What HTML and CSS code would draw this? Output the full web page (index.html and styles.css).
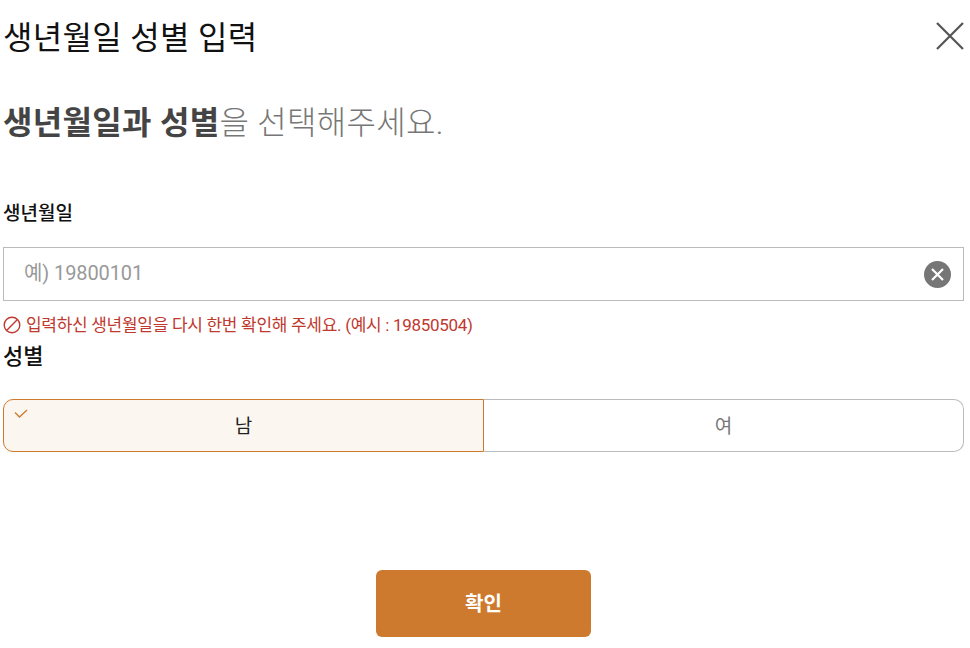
FILE: index.html
```html
<!DOCTYPE html>
<html lang="ko">
<head>
    <meta charset="UTF-8">
    <meta name="viewport" content="width=device-width, initial-scale=1.0">
    <title>생년월일 성별 입력</title>
    <link rel="stylesheet" href="styles.css">
</head>
<body>
    <div class="popup">
        <header class="popup-head">
            <h1>생년월일 성별 입력</h1>
            <button class="close-btn" aria-label="닫기">
                <svg width="28" height="28" viewBox="0 0 28 28"><path d="M1 1 L27 27 M27 1 L1 27" stroke="#555" stroke-width="2.2" fill="none"/></svg>
            </button>
        </header>

        <h2 class="lead"><strong>생년월일과 성별</strong>을 선택해주세요.</h2>

        <label class="field-label">생년월일</label>
        <div class="input-box">
            <span class="placeholder">예) 19800101</span>
            <button class="clear-btn" aria-label="지우기">
                <svg width="27" height="27" viewBox="0 0 27 27"><circle cx="13.5" cy="13.5" r="13.5" fill="#767676"/><path d="M8 8 L19 19 M19 8 L8 19" stroke="#fff" stroke-width="2.2" fill="none"/></svg>
            </button>
        </div>
        <p class="error">
            <svg width="18" height="18" viewBox="0 0 18 18"><circle cx="9" cy="9" r="7.8" stroke="#c0392f" stroke-width="1.4" fill="none"/><path d="M3.6 14.4 L14.4 3.6" stroke="#c0392f" stroke-width="1.4"/></svg>
            입력하신 생년월일을 다시 한번 확인해 주세요. (예시 : 19850504)
        </p>

        <div class="gender-label">성별</div>
        <div class="gender">
            <div class="gender-item selected">
                <svg class="check" width="14" height="10" viewBox="0 0 14 10"><path d="M1 3.5 L5.5 8 L13 1" stroke="#cd7a2e" stroke-width="1.3" fill="none"/></svg>
                남
            </div>
            <div class="gender-item">여</div>
        </div>

        <div class="actions">
            <button class="confirm-btn">확인</button>
        </div>
    </div>
</body>
</html>
```

FILE: styles.css
```css
/* General Styling */
* {
    margin: 0;
    padding: 0;
    box-sizing: border-box;
    font-family: Roboto, "Noto Sans CJK KR", sans-serif;
}

body {
    background: white;
    color: black;
}

button {
    background: none;
    border: none;
    cursor: pointer;
}

.popup {
    padding: 0 6px 0 3px;
}

/* Header */
.popup-head {
    display: flex;
    justify-content: space-between;
    align-items: center;
    height: 72px;
}

.popup-head h1 {
    padding-top: 4px;
    font-size: 32px;
    line-height: 68px;
    font-weight: 400;
    letter-spacing: 0.3px;
    color: #111;
}

.close-btn {
    display: flex;
}

.lead {
    margin-top: 26px;
    font-size: 32px;
    line-height: 50px;
    font-weight: 300;
    letter-spacing: 0.3px;
    color: #777;
}

.lead strong {
    font-weight: 700;
    color: #444;
}

/* Birth date */
.field-label {
    display: block;
    margin-top: 53px;
    font-size: 19px;
    line-height: 26px;
    font-weight: 500;
    color: #111;
}

.input-box {
    display: flex;
    justify-content: space-between;
    align-items: center;
    height: 54px;
    margin-top: 20px;
    padding: 0 12px 0 20px;
    border: 1px solid #bbb;
}

.placeholder {
    padding-bottom: 5px;
    font-size: 20px;
    letter-spacing: -0.1px;
    color: #999;
}

.clear-btn {
    display: flex;
}

.error {
    display: flex;
    align-items: center;
    gap: 5px;
    margin-top: 13px;
    font-size: 17px;
    line-height: 22px;
    letter-spacing: -0.3px;
    color: #c0392f;
}

/* Gender */
.gender-label {
    margin-top: 6px;
    font-size: 22px;
    line-height: 30px;
    font-weight: 500;
    color: #111;
}

.gender {
    display: flex;
    height: 53px;
    margin-top: 27px;
}

.gender-item {
    position: relative;
    flex: 1;
    display: flex;
    justify-content: center;
    align-items: center;
    padding-bottom: 3px;
    border: 1px solid #bbb;
    border-left: none;
    border-radius: 0 10px 10px 0;
    font-size: 19px;
    color: #777;
}

.gender-item.selected {
    border: 1px solid #cd7a2e;
    border-radius: 10px 0 0 10px;
    background: #fcf6f0;
    color: #222;
}

.check {
    position: absolute;
    top: 9px;
    left: 10px;
}

/* Confirm */
.actions {
    display: flex;
    justify-content: center;
    margin-top: 118px;
}

.confirm-btn {
    width: 215px;
    height: 67px;
    padding-bottom: 2px;
    border-radius: 6px;
    background: #cd7a2e;
    font-size: 20px;
    font-weight: 700;
    color: white;
}
```
